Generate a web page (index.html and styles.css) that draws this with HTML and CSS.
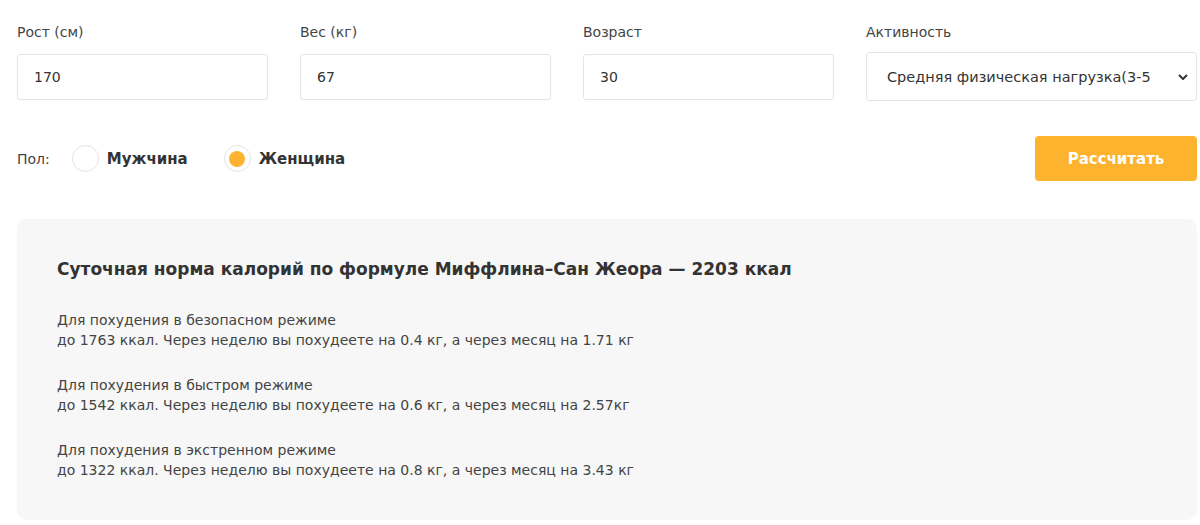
FILE: index.html
```html
<!DOCTYPE html>
<html lang="ru">
<head>
    <meta charset="UTF-8">
    <meta name="viewport" content="width=device-width, initial-scale=1.0">
    <title>Калькулятор калорий</title>
    <link rel="stylesheet" href="styles.css">
</head>
<body>
    <div class="calc">
        <div class="fields">
            <div class="field">
                <label for="height">Рост (см)</label>
                <input type="text" id="height" value="170">
            </div>
            <div class="field">
                <label for="weight">Вес (кг)</label>
                <input type="text" id="weight" value="67">
            </div>
            <div class="field">
                <label for="age">Возраст</label>
                <input type="text" id="age" value="30">
            </div>
            <div class="field">
                <label for="activity">Активность</label>
                <select id="activity">
                    <option>Средняя физическая нагрузка(3-5 раз в неделю)</option>
                </select>
            </div>
        </div>

        <div class="gender-row">
            <div class="gender">
                <span class="gender-label">Пол:</span>
                <label class="radio"><input type="radio" name="sex"><span class="mark"></span>Мужчина</label>
                <label class="radio"><input type="radio" name="sex" checked><span class="mark"></span>Женщина</label>
            </div>
            <button type="button" class="calc-btn">Рассчитать</button>
        </div>

        <div class="result">
            <h3>Суточная норма калорий по формуле Миффлина–Сан Жеора — 2203 ккал</h3>
            <p>Для похудения в безопасном режиме<br>до 1763 ккал. Через неделю вы похудеете на 0.4 кг, а через месяц на 1.71 кг</p>
            <p>Для похудения в быстром режиме<br>до 1542 ккал. Через неделю вы похудеете на 0.6 кг, а через месяц на 2.57кг</p>
            <p>Для похудения в экстренном режиме<br>до 1322 ккал. Через неделю вы похудеете на 0.8 кг, а через месяц на 3.43 кг</p>
        </div>
    </div>
</body>
</html>
```

FILE: styles.css
```css
body {
    margin: 0;
    font-family: "DejaVu Sans", Verdana, sans-serif;
    font-size: 14px;
    color: #333;
    background-color: #fff;
}

.calc {
    padding: 21px 3px 5px 17px;
}

.fields {
    display: grid;
    grid-template-columns: 251px 251px 251px 1fr;
    column-gap: 32px;
}

.field label {
    display: block;
    height: 22px;
    line-height: 22px;
    margin-bottom: 11px;
    color: #444;
}

.field input,
.field select {
    width: 100%;
    height: 46px;
    box-sizing: border-box;
    border: 1px solid #e5e5e5;
    border-radius: 3px;
    background-color: #fff;
    font-family: inherit;
    font-size: 14px;
    color: #333;
    outline: none;
}

.field input {
    padding: 0 16px;
}

.field select {
    height: 49px;
    margin-top: -2px;
    padding: 0 40px 0 20px;
    font-size: 14.5px;
    -webkit-appearance: none;
    appearance: none;
    background-image: url("data:image/svg+xml,%3Csvg xmlns='http://www.w3.org/2000/svg' width='10' height='6' viewBox='0 0 10 6'%3E%3Cpath d='M1 1l4 4 4-4' fill='none' stroke='%23333' stroke-width='2'/%3E%3C/svg%3E");
    background-repeat: no-repeat;
    background-position: right 8px center;
}

.gender-row {
    display: flex;
    justify-content: space-between;
    align-items: center;
    margin-top: 35px;
}

.gender {
    display: flex;
    align-items: center;
}

.gender-label {
    color: #444;
    margin-right: 22px;
}

.radio {
    display: flex;
    align-items: center;
    font-weight: bold;
    font-size: 15px;
    color: #333;
    margin-right: 36px;
    cursor: pointer;
}

.radio input {
    display: none;
}

.mark {
    width: 27px;
    height: 27px;
    box-sizing: border-box;
    border: 1px solid #e3e3e3;
    border-radius: 50%;
    margin-right: 8px;
    display: flex;
    align-items: center;
    justify-content: center;
}

.radio input:checked + .mark::after {
    content: "";
    width: 16px;
    height: 16px;
    border-radius: 50%;
    background-color: #fdb32e;
}

.calc-btn {
    width: 162px;
    height: 45px;
    border: none;
    border-radius: 4px;
    background-color: #fdb32e;
    color: #fff;
    font-family: inherit;
    font-size: 15px;
    font-weight: bold;
    cursor: pointer;
}

.result {
    margin-top: 38px;
    background-color: #f7f7f7;
    border-radius: 10px;
    padding: 40px 40px 30px;
    height: 301px;
    box-sizing: border-box;
}

.result h3 {
    margin: 0 0 31px;
    font-size: 17px;
    color: #333;
}

.result p {
    margin: 0 0 25px;
    line-height: 20px;
    color: #444;
}
```
